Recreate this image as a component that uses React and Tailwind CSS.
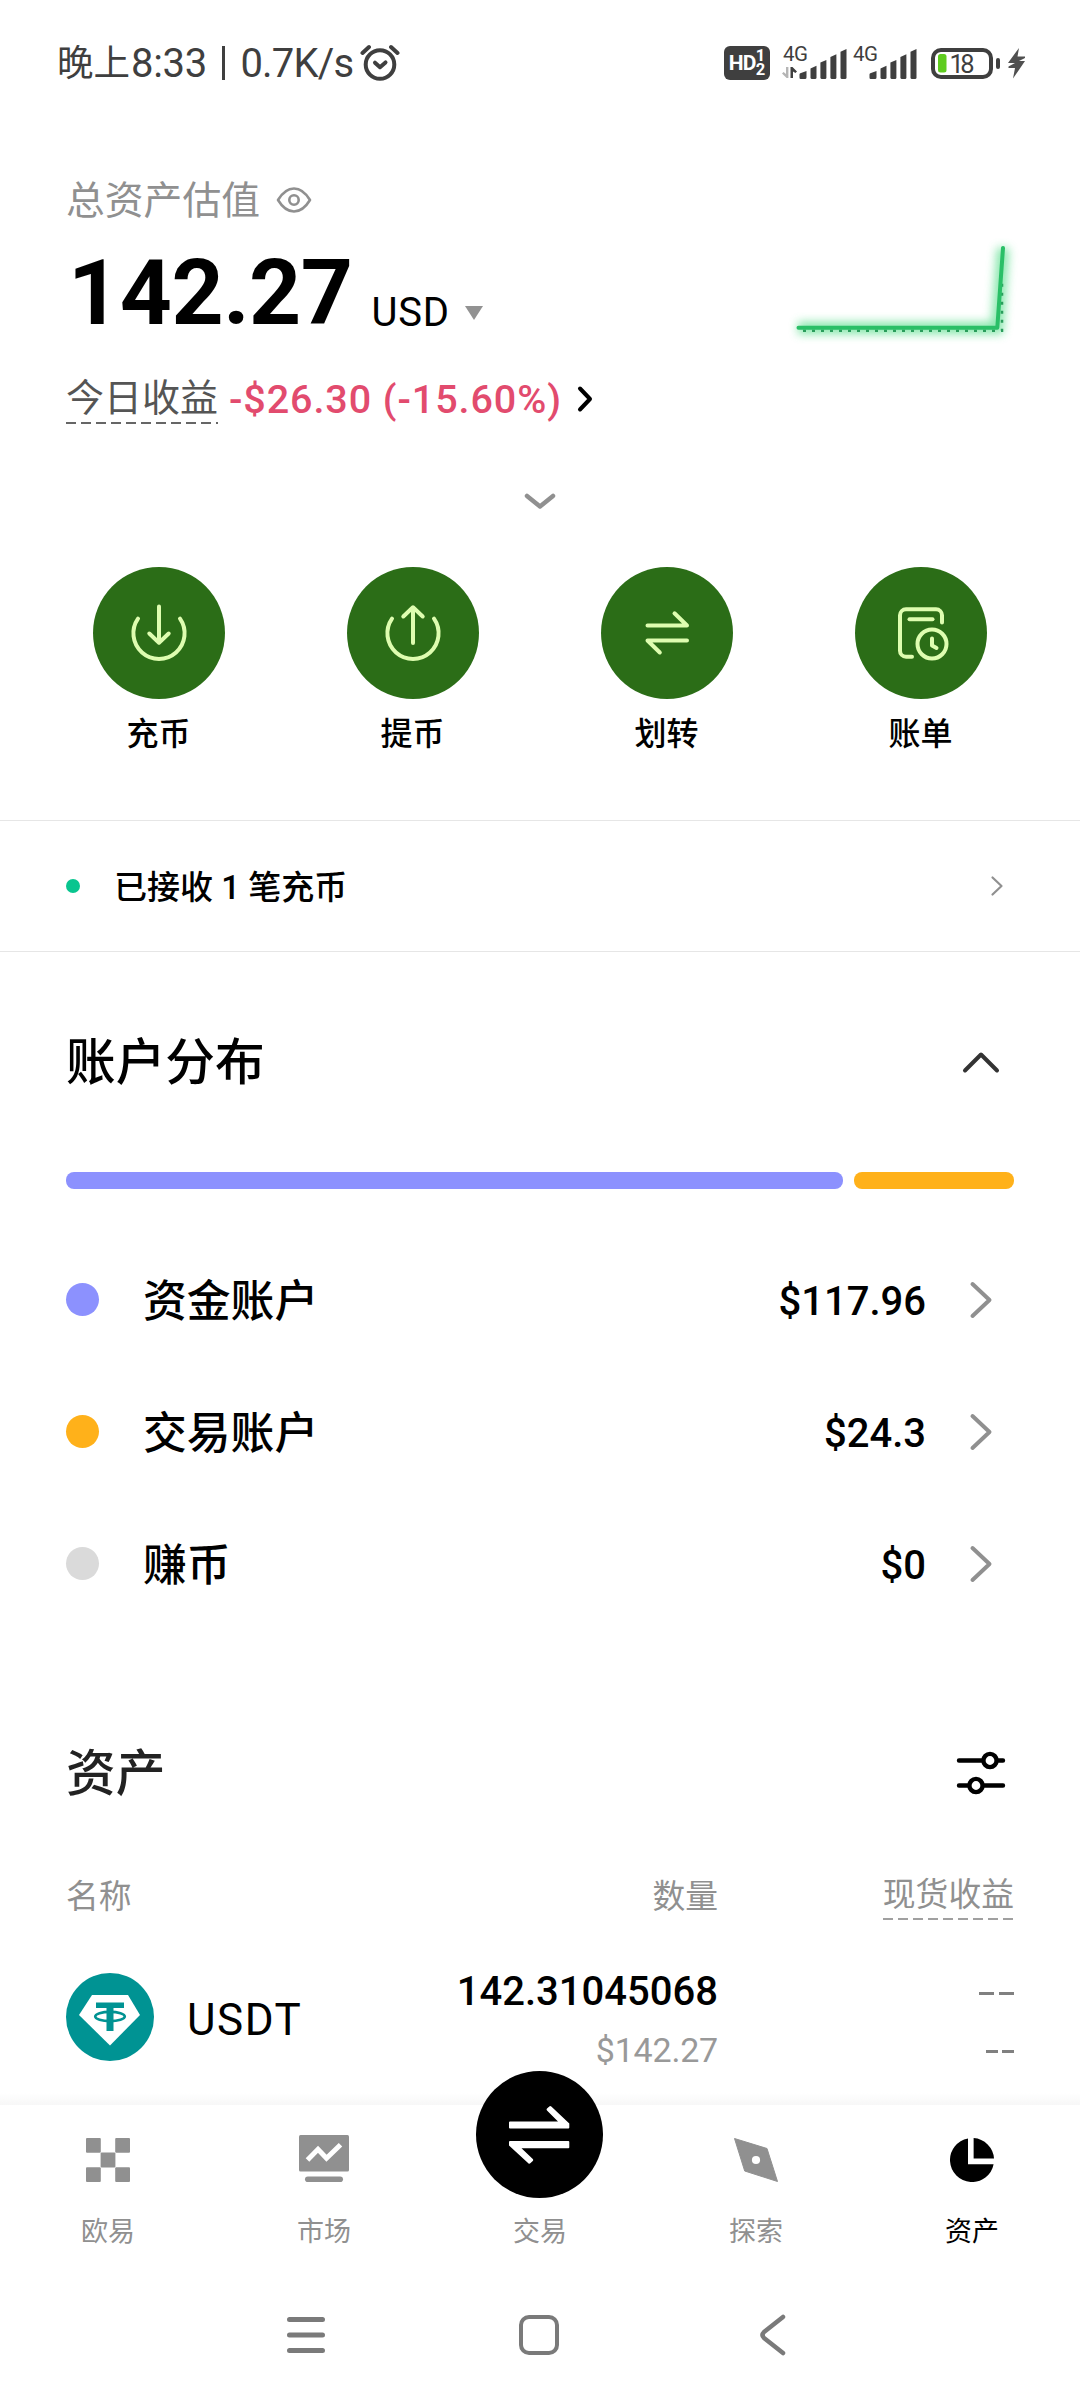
const shares = [
  { id: "funding", width: "w-[777px]", color: "bg-[#8c91fe]" },
  { id: "trading", width: "w-[160px]", color: "bg-[#ffb11a]" },
];

const accounts = [
  { name: "资金账户", amount: "$117.96", color: "bg-[#8c91fe]" },
  { name: "交易账户", amount: "$24.3", color: "bg-[#ffb11a]" },
  { name: "赚币", amount: "$0", color: "bg-[#dadada]" },
];

const actions = [
  { label: "充币", icon: <DepositIcon /> },
  { label: "提币", icon: <WithdrawIcon /> },
  { label: "划转", icon: <TransferIcon /> },
  { label: "账单", icon: <BillIcon /> },
];

const tabs = [
  { label: "欧易", icon: <OkxIcon /> },
  { label: "市场", icon: <MarketIcon /> },
  { label: "交易", icon: <TradeIcon /> },
  { label: "探索", icon: <ExploreIcon /> },
  { label: "资产", icon: <PieIcon />, active: true },
];

function ActionSvg({ children }) {
  return (
    <svg
      viewBox="0 0 132 132"
      className="h-[132px] w-[132px]"
      fill="none"
      stroke="#defdb0"
      strokeWidth="4"
      strokeLinecap="round"
      strokeLinejoin="round"
    >
      {children}
    </svg>
  );
}

function DepositIcon() {
  return (
    <ActionSvg>
      <path d="M45 51.7A25.6 25.6 0 1 0 87 51.7" />
      <path d="M66 39.5V75.5M56.3 66.5 66 75.7 75.7 66.5" />
    </ActionSvg>
  );
}

function WithdrawIcon() {
  return (
    <ActionSvg>
      <path d="M45 51.7A25.6 25.6 0 1 0 87 51.7" />
      <path d="M66 76V40.5M56.3 49.5 66 40.3 75.7 49.5" />
    </ActionSvg>
  );
}

function TransferIcon() {
  return (
    <ActionSvg>
      <path d="M46.5 58.5H86L73.5 46.3" />
      <path d="M86 73.5H46.5L58.8 85.5" />
    </ActionSvg>
  );
}

function BillIcon() {
  return (
    <ActionSvg>
      <path d="M57 89.7H51A6 6 0 0 1 45 83.7V48.3A6 6 0 0 1 51 42.3H81A6 6 0 0 1 87 48.3V55.5" />
      <path d="M54.5 52.3H77.5" />
      <circle cx="77" cy="77" r="14.5" />
      <path d="M77 71.5V78.5L81.5 81" />
    </ActionSvg>
  );
}

function OkxIcon() {
  return (
    <svg viewBox="0 0 44 44" className="h-11 w-11" fill="#909090">
      <rect width="14.8" height="14.8" rx="1" />
      <rect x="29.2" width="14.8" height="14.8" rx="1" />
      <rect x="14.6" y="14.6" width="14.8" height="14.8" rx="1" />
      <rect y="29.2" width="14.8" height="14.8" rx="1" />
      <rect x="29.2" y="29.2" width="14.8" height="14.8" rx="1" />
    </svg>
  );
}

function MarketIcon() {
  return (
    <svg viewBox="0 0 50 50" className="h-[50px] w-[50px]">
      <rect y="0" width="50" height="36.5" rx="1.5" fill="#909090" />
      <path d="M8.5 25 19 14.3 27.5 23.3 41.5 9.8" fill="none" stroke="#fff" strokeWidth="5" />
      <rect x="6" y="41.5" width="38" height="5.6" rx="2.8" fill="#909090" />
    </svg>
  );
}

function TradeIcon() {
  return (
    <svg viewBox="0 0 127 127" className="absolute -top-[34px] mr-px h-[127px] w-[127px]">
      <circle cx="63.5" cy="63.5" r="63.5" fill="#000" />
      <path
        d="M34 50.4H82L71 39.6Q70 38.6 71 37.6L73.3 35.4Q74.3 34.6 75.3 35.6L93.3 52.4V56.6Q93.3 57.6 92.3 57.6H34Q33 57.6 33 56.6V51.4Q33 50.4 34 50.4Z"
        fill="#fff"
      />
      <path
        d="M92.3 77.2H45.5L56.8 88Q57.8 89 56.8 90L54.3 92.3Q53.3 93.2 52.3 92.2L33 74.4V71Q33 70 34 70H92.3Q93.3 70 93.3 71V76.2Q93.3 77.2 92.3 77.2Z"
        fill="#fff"
      />
    </svg>
  );
}

function ExploreIcon() {
  return (
    <svg viewBox="0 0 44 44" className="h-11 w-11">
      <path
        d="M.5.5 33 10.5 43.5 43.5 10.7 33Z"
        fill="#909090"
        stroke="#909090"
        strokeLinejoin="round"
      />
      <circle cx="22" cy="22" r="4.1" fill="#fff" />
    </svg>
  );
}

function PieIcon() {
  return (
    <svg viewBox="0 0 44 44" className="h-11 w-11">
      <path d="M18 .4V26.2H43.6A22 22 0 1 1 18 .4Z" fill="#000" />
      <path d="M23.6 0A22 22 0 0 1 44 20.4H23.6Z" fill="#000" />
    </svg>
  );
}

function Signal({ data }) {
  return (
    <svg viewBox="0 0 66 42" className="h-[42px] w-[66px]" fill="#3f3f3f">
      <text x="1" y="22.5" fontSize="20.5" fontFamily="Roboto" textLength="25">
        4G
      </text>
      {data && (
        <>
          <path d="M4 29H6.4V40H4.6L0 35.4 1.6 34 4 36Z" fill="#b5b5b5" />
          <path d="M8.5 40V29H10.5L15 33.4 13.4 35 11 33.4V40Z" />
        </>
      )}
      <path d="M17.5 40V36.5Q17.5 35.8 18.3 35.3L24.5 33V39.5Q24.5 41 23 41H18.7Q17.5 41 17.5 39.8Z" />
      <path d="M28.5 30.5 34.5 27.8V39.5Q34.5 41 33 41H30Q28.5 41 28.5 39.5Z" />
      <path d="M38.4 24.5 44.4 22V39.5Q44.4 41 43 41H40Q38.4 41 38.4 39.5Z" />
      <path d="M48.4 19 54.4 16.2V39.5Q54.4 41 53 41H50Q48.4 41 48.4 39.5Z" />
      <path d="M58.5 13.8 64.5 11V39.5Q64.5 41 63 41H60Q58.5 41 58.5 39.5Z" />
    </svg>
  );
}

function StatusBar() {
  return (
    <div className="flex h-[126px] items-center justify-between pl-[57px] pr-[55px] text-[#3f3f3f]">
      <div className="flex items-center text-[40px] leading-none">
        <span className="pt-0.5 text-[36.5px]">晚上</span>
        <span className="ml-px pt-0.5 tracking-[-0.3px]">8:33</span>
        <span className="mx-[15px] h-[34px] w-[3.5px] bg-[#3f3f3f]"></span>
        <span className="pt-0.5 tracking-[-0.8px]">0.7K/s</span>
        <svg
          viewBox="0 0 40 38"
          className="ml-[7px] h-[38px] w-[40px]"
          fill="none"
          stroke="#3f3f3f"
          strokeWidth="4"
          strokeLinecap="round"
          strokeLinejoin="round"
        >
          <circle cx="20" cy="20.5" r="14.3" />
          <path d="M15 18.7 20 23.2 25.5 18.4" />
          <path d="M2.5 9 9 3M37.5 9 31 3" />
        </svg>
      </div>
      <div className="flex items-center">
        <div className="flex h-[34px] w-[46px] items-center justify-center rounded-md bg-[#3f3f3f] font-bold text-white">
          <span className="text-[21px] leading-none tracking-[-0.8px]">HD</span>
          <span className="flex flex-col text-[16.5px] leading-[14.5px]">
            <span>1</span>
            <span>2</span>
          </span>
        </div>
        <div className="ml-3 flex gap-1 pb-2">
          <Signal data />
          <Signal />
        </div>
        <svg viewBox="0 0 94 32" className="ml-[13px] h-8 w-[94px]">
          <rect x="2" y="3" width="58" height="27" rx="8" fill="none" stroke="#3f3f3f" strokeWidth="4" />
          <rect x="7" y="7" width="8.5" height="18.5" rx="2.5" fill="#5fcc1f" />
          <text x="18.5" y="25.6" fontSize="25.5" fontFamily="Roboto" fill="#3f3f3f" textLength="25">
            18
          </text>
          <rect x="65" y="11" width="4" height="11" rx="2" fill="#3f3f3f" />
          <path d="M88 1 77 16H84L77.5 19.5V21H84L82 31.5 94 14H88L94 11V9.5H86.5Z" fill="#505050" />
        </svg>
      </div>
    </div>
  );
}

function Sparkline() {
  return (
    <svg viewBox="0 0 240 120" className="mt-[56px] h-[120px] w-[240px]" fill="none">
      <defs>
        <filter id="glow" x="-20%" y="-40%" width="140%" height="180%">
          <feGaussianBlur stdDeviation="5" />
        </filter>
      </defs>
      <path d="M14 96H213.3L219 16" stroke="#4fdc85" strokeWidth="12" opacity="0.7" filter="url(#glow)" />
      <path d="M19 98.7H218V50" stroke="#2a9d5c" strokeWidth="2.5" strokeDasharray="3 6" />
      <path
        d="M14.5 95.7H213.3L219 16"
        stroke="#2abf67"
        strokeWidth="4"
        strokeLinecap="round"
        strokeLinejoin="round"
      />
    </svg>
  );
}

function Header() {
  return (
    <div className="mt-[50px] flex h-[262px] justify-between pl-[66px] pr-[56px]">
      <div>
        <div className="flex h-12 items-center text-[#909090]">
          <span className="pt-px text-[38.8px] leading-[48px]">总资产估值</span>
          <svg viewBox="0 0 36 28" className="ml-4 h-7 w-9" fill="none" stroke="#909090" strokeWidth="2.6">
            <path d="M2 14Q9 2.5 18 2.5T34 14Q27 25.5 18 25.5T2 14Z" strokeLinejoin="round" />
            <circle cx="18" cy="14" r="4.7" />
          </svg>
        </div>
        <div className="flex h-[135px] items-center pt-1">
          <div className="flex items-baseline">
            <span className="ml-0.5 text-[91px] font-bold leading-none tracking-[-0.5px]">142.27</span>
            <span className="ml-[19px] translate-y-0.5 text-[40px] leading-none tracking-[0.8px]">USD</span>
            <svg viewBox="0 0 18 14" className="ml-[15px] h-3.5 w-[18px] -translate-y-1">
              <path d="M0 0H18L9 14Z" fill="#929292" />
            </svg>
          </div>
        </div>
        <div className="flex h-[79px] items-center">
          <span className="h-[51px] bg-[repeating-linear-gradient(90deg,#666_0_10px,transparent_10px_15px)] bg-[length:100%_2px] bg-bottom bg-no-repeat text-[38px] leading-[51px] text-[#555]">
            今日收益
          </span>
          <span className="ml-[11px] pt-0.5 text-[39.5px] font-medium leading-none tracking-[0.92px] text-[#e24b6e]">
            -$26.30 (-15.60%)
          </span>
          <svg viewBox="0 0 16 28" className="ml-[15px] h-7 w-4" fill="none" stroke="#000" strokeWidth="4">
            <path d="M3 3.5 13 14 3 24.5" strokeLinecap="round" strokeLinejoin="round" />
          </svg>
        </div>
      </div>
      <Sparkline />
    </div>
  );
}

function Chevron() {
  return (
    <svg viewBox="0 0 24 40" className="ml-[43px] mr-[21px] h-10 w-6" fill="none" stroke="#909090" strokeWidth="4">
      <path d="M3.5 4 20.5 20 3.5 36" strokeLinecap="round" strokeLinejoin="round" />
    </svg>
  );
}

function UsdtLogo() {
  return (
    <svg viewBox="0 0 88 88" className="mb-1.5 h-[88px] w-[88px]">
      <circle cx="44" cy="44" r="44" fill="#009393" />
      <path d="M26 22H62L74 42 44 72.5 13 42Z" fill="#fff" />
      <path d="M30 29.5H58V35H47.5V58H40.5V35H30Z" fill="#009393" />
      <ellipse cx="44" cy="43.5" rx="14.8" ry="4.6" fill="none" stroke="#009393" strokeWidth="2.6" />
    </svg>
  );
}

export default function App() {
  return (
    <div className="flex h-[2400px] w-[1080px] flex-col overflow-hidden bg-white font-[Roboto,'Noto_Sans_CJK_SC',sans-serif] text-black">
      <StatusBar />
      <Header />

      <div className="flex h-[129px] items-center justify-center pb-[3px]">
        <svg viewBox="0 0 32 18" className="h-[18px] w-8" fill="none" stroke="#909090" strokeWidth="4.5">
          <path d="M3 4 16 14.5 29 4" strokeLinecap="round" strokeLinejoin="round" />
        </svg>
      </div>

      <div className="grid h-[253px] grid-cols-4 pl-8 pr-8">
        {actions.map((a) => (
          <div key={a.label} className="flex flex-col items-center">
            <div className="mr-px rounded-full bg-[#2b6d17]">{a.icon}</div>
            <span className="mt-[15px] pr-px text-[32px] font-medium leading-10">{a.label}</span>
          </div>
        ))}
      </div>

      <div className="flex h-[132px] items-center border-y border-[#e6e6e6] pl-[66px] pr-[76px]">
        <span className="h-3.5 w-3.5 rounded-full bg-[#09c58f]"></span>
        <span className="ml-[34px] flex-1 pt-[3px] text-[33px] font-medium leading-10">已接收 1 笔充币</span>
        <svg viewBox="0 0 14 22" className="h-[22px] w-3.5" fill="none" stroke="#909090" strokeWidth="2.2">
          <path d="M2.5 2.5 11.5 11 2.5 19.5" strokeLinecap="round" strokeLinejoin="round" />
        </svg>
      </div>

      <div className="flex h-[220px] items-center justify-between pl-[66px] pr-[79px]">
        <h2 className="pt-0.5 text-[49.7px] font-medium leading-[60px]">账户分布</h2>
        <svg viewBox="0 0 40 24" className="h-6 w-10" fill="none" stroke="#333" strokeWidth="4">
          <path d="M4 20.5 20 4.5 36 20.5" strokeLinecap="round" strokeLinejoin="round" />
        </svg>
      </div>

      <div className="flex gap-[11px] px-[66px]">
        {shares.map((s) => (
          <div key={s.id} className={`h-[17px] rounded-lg ${s.width} ${s.color}`}></div>
        ))}
      </div>

      <div className="mt-[45px] px-[66px]">
        {accounts.map((a) => (
          <div key={a.name} className="flex h-[132px] items-center">
            <span className={`mb-px h-[33px] w-[33px] rounded-full ${a.color}`}></span>
            <span className="ml-[44px] flex-1 pt-1 text-[43.8px] font-medium leading-[60px]">{a.name}</span>
            <span className="pt-[3px] text-[40px] font-medium leading-[60px]">{a.amount}</span>
            <Chevron />
          </div>
        ))}
      </div>

      <div className="mt-[93px] flex h-[100px] items-center justify-between pl-[66px] pr-[73px]">
        <h2 className="pt-0.5 text-[49.7px] font-medium leading-[60px] text-[#222]">资产</h2>
        <svg viewBox="0 0 52 48" className="h-12 w-[52px]" fill="none" stroke="#000" strokeWidth="4.4" strokeLinecap="round">
          <path d="M4 11.5H28M42 11.5H48" />
          <circle cx="35" cy="11.5" r="6.6" />
          <path d="M4 36.5H14M28 36.5H48" />
          <circle cx="21" cy="36.5" r="6.6" />
        </svg>
      </div>

      <div className="flex h-[137px] items-start px-[66px] pt-[49px] text-[32.8px] leading-[50px] text-[#909090]">
        <span className="w-[252px]">名称</span>
        <span className="w-[400px] text-right">数量</span>
        <span className="-mt-0.5 ml-auto bg-[repeating-linear-gradient(90deg,#a0a0a0_0_10px,transparent_10px_15px)] bg-[length:100%_2px] bg-bottom bg-no-repeat">
          现货收益
        </span>
      </div>

      <div className="flex h-[120px] items-center px-[66px]">
        <UsdtLogo />
        <span className="ml-[33px] w-[131px] text-[44px] leading-[60px] tracking-[1.5px]">USDT</span>
        <div className="flex w-[400px] flex-col text-right">
          <span className="pt-1 text-[40px] font-medium leading-[56px]">142.31045068</span>
          <span className="text-[34px] leading-[60px] text-[#999] tracking-[-0.2px]">$142.27</span>
        </div>
        <div className="flex flex-1 flex-col items-end">
          <div className="flex h-[60px] items-center gap-[5px] pt-[6px]">
            <span className="h-[3px] w-[15px] bg-[#808080]"></span>
            <span className="h-[3px] w-[15px] bg-[#808080]"></span>
          </div>
          <div className="flex h-[60px] items-center gap-[4px] pt-[3px]">
            <span className="h-[2.5px] w-[12px] bg-[#808080]"></span>
            <span className="h-[2.5px] w-[12px] bg-[#808080]"></span>
          </div>
        </div>
      </div>

      <div className="mt-[13px] h-3 bg-linear-to-b from-white to-[#f7f7f7]"></div>
      <nav className="grid h-[165px] grid-cols-5">
        {tabs.map((t) => (
          <div key={t.label} className="relative flex flex-col items-center">
            <div className="flex h-[110px] items-center justify-center">{t.icon}</div>
            <span className={`pt-px text-[27px] leading-8 ${t.active ? "text-black" : "text-[#909090]"}`}>
              {t.label}
            </span>
          </div>
        ))}
      </nav>

      <div className="flex h-[130px] items-center pl-[286px]">
        <svg viewBox="0 0 40 40" className="h-10 w-10" stroke="#7a7a7a" strokeWidth="5" strokeLinecap="round">
          <path d="M3.5 4.5H36.5M3.5 20H36.5M3.5 35.5H36.5" />
        </svg>
        <span className="ml-[193px] h-[40px] w-[40px] rounded-[10px] border-[4.5px] border-[#7a7a7a]"></span>
        <svg viewBox="0 0 28 42" className="ml-[200px] h-[42px] w-7" fill="none" stroke="#7a7a7a" strokeWidth="4.5">
          <path d="M24 3 5 18Q2 21 5 24L24 39" strokeLinecap="round" strokeLinejoin="round" />
        </svg>
      </div>
    </div>
  );
}
